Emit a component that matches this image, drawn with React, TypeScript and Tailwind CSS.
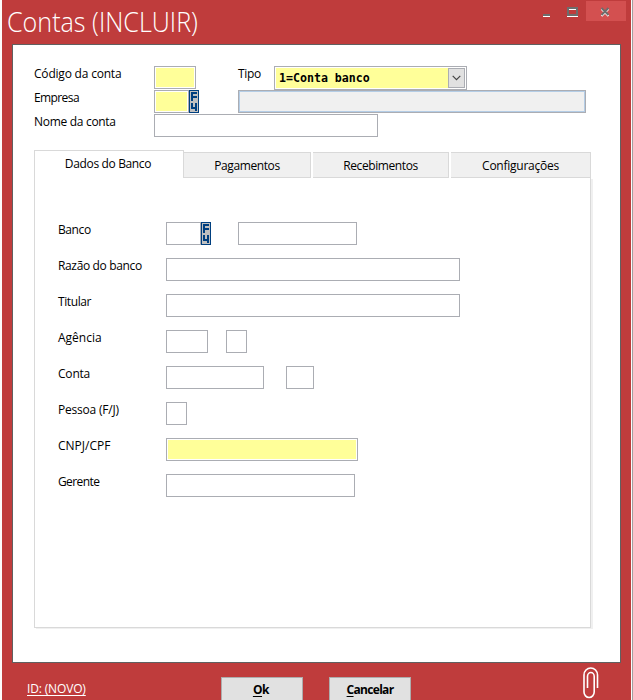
import React from "react";

const CELL = "box-border h-[23px] shrink-0 border border-[#abadb3] outline-none";

function Field({ w, yellow = false, className = "", label }: { w: string; yellow?: boolean; className?: string; label: string }) {
  return (
    <input
      aria-label={label}
      className={`${CELL} ${w} ${className} ${yellow ? "bg-[#ffff99] shadow-[inset_0_0_0_1px_#ffffff]" : "bg-white"}`}
    />
  );
}

function LookupKey() {
  return (
    <button className="h-[23px] w-[10px] shrink-0" aria-label="Pesquisar">
      <svg width="10" height="23" viewBox="0 0 10 23" shapeRendering="crispEdges">
        <rect x="0" y="0" width="10" height="23" fill="#003f7f" />
        <rect x="1" y="1" width="8" height="21" fill="#c0c0c0" />
        <path d="M2 2H8V4H4V6H8V8H4V11H2ZM2 13H4V17H6V13H8V21H6V19H2Z" fill="#003f7f" />
      </svg>
    </button>
  );
}

function Label({ children, className }: { children: React.ReactNode; className: string }) {
  return <label className={`h-[17px] shrink-0 whitespace-nowrap text-[12px] leading-[15px] ${className}`}>{children}</label>;
}

function BankRow({ label, tracking = "tracking-normal", children }: { label: string; tracking?: string; children: React.ReactNode }) {
  return (
    <div className="flex h-9 items-start">
      <Label className={`w-[108px] ${tracking}`}>{label}</Label>
      {children}
    </div>
  );
}

function Tab({ label, className }: { label: string; className: string }) {
  return (
    <button className={`mt-[2px] h-[26px] shrink-0 border border-[#d9d9d9] border-l-0 bg-[#f0f0f0] text-center text-[12px] leading-[25px] ${className}`}>
      {label}
    </button>
  );
}

export default function App() {
  return (
    <div className="flex h-[700px] w-[633px] overflow-hidden border-r border-[#a0a0a0] bg-[#fcfcfc] pl-[2px] pr-px font-['Open_Sans','Noto_Sans',sans-serif] text-black">
      <div className="flex h-full w-[629px] shrink-0 flex-col overflow-hidden bg-[#bf3c3c]">
        <header className="flex h-[44px] shrink-0 items-start">
          <h1 className="w-[539px] shrink-0 whitespace-nowrap pl-[5px] text-[27px] font-light leading-[43px] text-white">
            <span className="inline-block origin-left scale-x-[0.93]">Contas (INCLUIR)</span>
          </h1>
          <svg width="40" height="22" viewBox="0 0 40 22" shapeRendering="crispEdges" className="shrink-0">
            <path d="M2 14h7v2H2z" fill="#6d6d6d" />
            <path d="M2 16h7v1H2z" fill="#fff" />
            <path d="M26 7h11v9H26z" fill="#6d6d6d" />
            <path d="M28 9h7v5h-7z" fill="#bf3c3c" />
            <path d="M28 9h7v1h-7zM26 16h11v1H26z" fill="#fff" />
          </svg>
          <button aria-label="Fechar" className="ml-[5px] mt-px h-5 w-10 bg-[#d35050]">
            <svg width="40" height="20" viewBox="0 0 40 20">
              <path d="M15.5 8l7 7M22.500 8l-7 7" stroke="#fff" strokeWidth="2" />
              <path d="M15.5 7l7 7M22.500 7l-7 7" stroke="#6d6d6d" strokeWidth="2" />
            </svg>
          </button>
        </header>

        <main className="ml-[10px] flex h-[619px] w-[609px] shrink-0 flex-col border border-[#606060] bg-white pl-[21px] pt-[21px]">
          <div className="flex h-6 items-start">
            <Label className="w-[120px] tracking-[-0.2px]">Código da conta</Label>
            <Field label="Código da conta" w="w-[42px]" yellow />
            <Label className="ml-[42px] w-9 tracking-[-0.3px]">Tipo</Label>
            <div className="flex h-6 w-[193px] shrink-0 border border-[#abadb3] bg-white p-px">
              <span className="flex-1 whitespace-pre bg-[#ffff99] pl-[3px] font-['DejaVu_Sans_Mono',monospace] text-[11.6px] font-bold leading-[21px]">1=Conta banco</span>
              <span className="flex h-5 w-[17px] items-center justify-center border border-[#abadb3] bg-[#e1e1e1]">
                <svg width="9" height="6" viewBox="0 0 9 6"><path d="M.7.8l3.8 3.8L8.3.8" fill="none" stroke="#444" strokeWidth="1.2" /></svg>
              </span>
            </div>
          </div>
          <div className="flex h-6 items-start">
            <Label className="w-[120px] tracking-[-0.6px]">Empresa</Label>
            <Field label="Empresa" w="w-[35px]" yellow />
            <LookupKey />
            <div className="ml-[39px] h-[23px] w-[348px] shrink-0 border border-[#abadb3] bg-[#f0f0f0] shadow-[inset_0_0_0_1px_#b4cde6]" />
          </div>
          <div className="flex h-9 items-start">
            <Label className="w-[120px] tracking-[-0.3px]">Nome da conta</Label>
            <Field label="Nome da conta" w="w-[224px]" />
          </div>

          <nav className="flex h-7 w-[557px] shrink-0">
            <button className="h-7 w-[150px] shrink-0 border border-b-0 border-[#d9d9d9] bg-white pb-[2px] pr-[2px] text-center text-[12px] leading-[24px] tracking-[-0.35px]">Dados do Banco</button>
            <Tab label="Pagamentos" className="w-[127px] tracking-[-0.4px]" />
            <Tab label="Recebimentos" className="ml-[2px] w-[136px] tracking-[-0.4px]" />
            <Tab label="Configurações" className="ml-[2px] w-[140px] tracking-[-0.25px]" />
          </nav>
          <section className="flex h-[450px] w-[557px] shrink-0 flex-col border border-t-0 border-[#d9d9d9] pl-[23px] pt-[44px] shadow-[2px_1px_0_#f0f0f0]">
            <BankRow label="Banco" tracking="tracking-[-0.4px]">
              <Field label="Banco" w="w-[35px]" />
              <LookupKey />
              <Field label="Nome do banco" w="w-[119px]" className="ml-[27px]" />
            </BankRow>
            <BankRow label="Razão do banco" tracking="tracking-[-0.35px]"><Field label="Razão do banco" w="w-[294px]" /></BankRow>
            <BankRow label="Titular" tracking="tracking-[-0.4px]"><Field label="Titular" w="w-[294px]" /></BankRow>
            <BankRow label="Agência">
              <Field label="Agência" w="w-[42px]" />
              <Field label="Dígito da agência" w="w-[21px]" className="ml-[18px]" />
            </BankRow>
            <BankRow label="Conta" tracking="tracking-[-0.2px]">
              <Field label="Conta" w="w-[98px]" />
              <Field label="Dígito da conta" w="w-[28px]" className="ml-[22px]" />
            </BankRow>
            <BankRow label="Pessoa (F/J)" tracking="tracking-[-0.2px]"><Field label="Pessoa" w="w-[21px]" /></BankRow>
            <BankRow label="CNPJ/CPF"><Field label="CNPJ/CPF" w="w-[192px]" yellow /></BankRow>
            <BankRow label="Gerente" tracking="tracking-[-0.6px]"><Field label="Gerente" w="w-[189px]" /></BankRow>
          </section>
        </main>

        <footer className="flex h-[37px] shrink-0 items-start pl-[25px]">
          <a className="mt-[17px] w-[194px] shrink-0 whitespace-nowrap text-[12px] leading-[17px] tracking-[-0.15px] text-white underline underline-offset-2">ID: (NOVO)</a>
          <button className="mt-[14px] h-[26px] w-[82px] shrink-0 border border-[#adadad] bg-[#e1e1e1] pr-[2px] text-[12px] font-bold leading-[24px] tracking-[-0.4px]"><span className="underline underline-offset-2">O</span>k</button>
          <button className="ml-[26px] mt-[14px] h-[26px] w-[82px] shrink-0 border border-[#adadad] bg-[#e1e1e1] text-[12px] font-bold leading-[24px] tracking-[-0.7px]"><span className="underline underline-offset-2">C</span>ancelar</button>
          <svg width="18" height="34" viewBox="0 0 18 34" className="ml-[171px] mt-[3px] shrink-0">
            <path d="M15.500 22V9A6.750 7 0 0 0 2 9V26A5.100 5.500 0 0 0 12.200 26V10.500A3.350 4 0 0 0 5.500 10.500V22" fill="none" stroke="#fff" strokeWidth="1.6" />
          </svg>
        </footer>
      </div>
    </div>
  );
}
